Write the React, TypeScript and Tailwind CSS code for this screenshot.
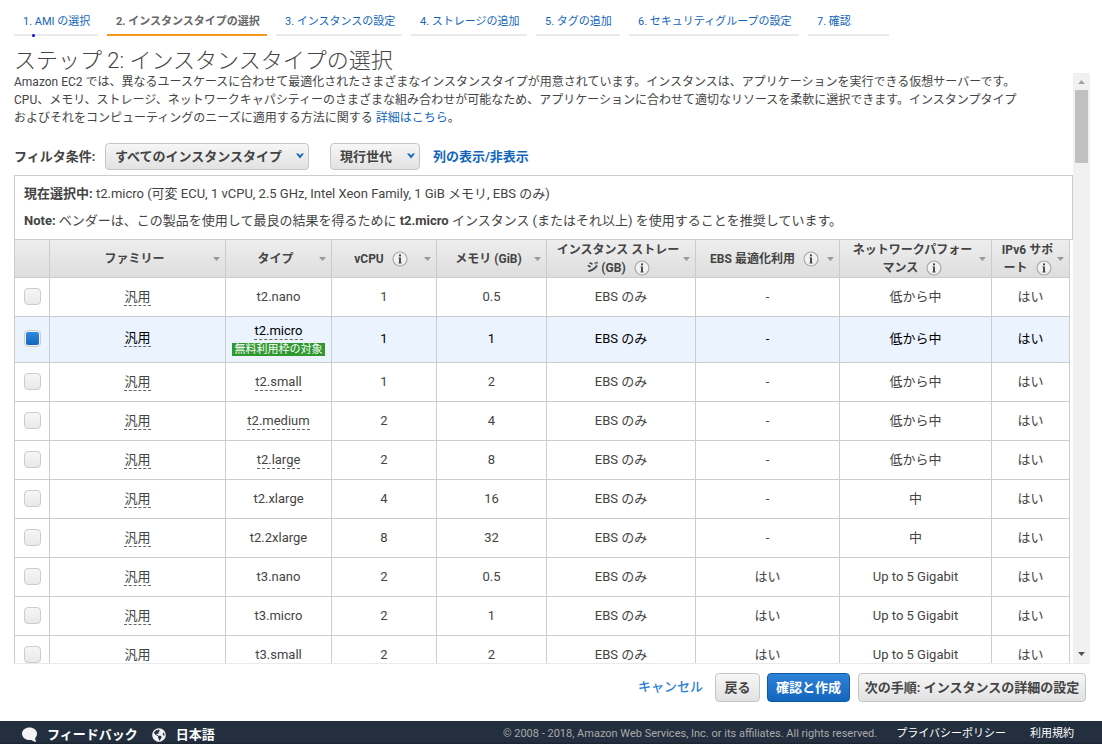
import React, { useState } from "react";
import { FaGlobeAmericas } from "react-icons/fa";

type InstanceType = {
  name: string;
  vcpu: string;
  memory: string;
  ebs: string;
  network: string;
  linked?: boolean;
  freeTier?: boolean;
};

const tabs = [
  { label: "1. AMI の選択", width: "w-[84px]" },
  { label: "2. インスタンスタイプの選択", width: "w-40", active: true },
  { label: "3. インスタンスの設定", width: "w-[126px]" },
  { label: "4. ストレージの追加", width: "w-[116px]" },
  { label: "5. タグの追加", width: "w-[84px]" },
  { label: "6. セキュリティグループの設定", width: "w-[170px]" },
  { label: "7. 確認", width: "w-[81px]" },
];

const columns = [
  { lines: ["ファミリー"], width: "w-44" },
  { lines: ["タイプ"], width: "w-[106px]" },
  { lines: ["vCPU"], info: true, width: "w-[105px]" },
  { lines: ["メモリ (GiB)"], width: "w-[110px]" },
  { lines: ["インスタンス ストレー", "ジ (GB)"], info: true, width: "w-[149px]" },
  { lines: ["EBS 最適化利用"], info: true, width: "w-36" },
  { lines: ["ネットワークパフォー", "マンス"], info: true, width: "w-[152px]" },
  { lines: ["IPv6 サポ", "ート"], info: true, width: "w-[78px]" },
];

const instances: InstanceType[] = [
  { name: "t2.nano", vcpu: "1", memory: "0.5", ebs: "-", network: "低から中" },
  { name: "t2.micro", vcpu: "1", memory: "1", ebs: "-", network: "低から中", linked: true, freeTier: true },
  { name: "t2.small", vcpu: "1", memory: "2", ebs: "-", network: "低から中", linked: true },
  { name: "t2.medium", vcpu: "2", memory: "4", ebs: "-", network: "低から中", linked: true },
  { name: "t2.large", vcpu: "2", memory: "8", ebs: "-", network: "低から中", linked: true },
  { name: "t2.xlarge", vcpu: "4", memory: "16", ebs: "-", network: "中" },
  { name: "t2.2xlarge", vcpu: "8", memory: "32", ebs: "-", network: "中" },
  { name: "t3.nano", vcpu: "2", memory: "0.5", ebs: "はい", network: "Up to 5 Gigabit" },
  { name: "t3.micro", vcpu: "2", memory: "1", ebs: "はい", network: "Up to 5 Gigabit" },
  { name: "t3.small", vcpu: "2", memory: "2", ebs: "はい", network: "Up to 5 Gigabit" },
];

function InfoIcon() {
  return (
    <svg viewBox="0 0 16 16" className="ml-2 inline-block size-4 align-[-4px]" aria-hidden="true">
      <circle cx="8" cy="8" r="7" fill="#f2f2f2" stroke="#a8a8a8" strokeWidth="1.2" />
      <rect x="7" y="3.4" width="2" height="2" fill="#4c4c4c" />
      <path d="M6.4 6.4H9v5.2h.6v.8H6.4v-.8H7V7.2h-.6z" fill="#4c4c4c" />
    </svg>
  );
}

function Chevron() {
  return (
    <svg viewBox="0 0 8 6" className="pointer-events-none absolute top-[10px] right-[5px] h-1.5 w-2" aria-hidden="true">
      <path d="M0 0.5L4 5.5L8 0.5H5.6L4 2.5L2.4 0.5Z" fill="#1166bb" />
    </svg>
  );
}

function Filter({ label, width }: { label: string; width: string }) {
  return (
    <span className={"relative block " + width}>
      <select
        aria-label={label}
        className="block h-[27px] w-full appearance-none rounded border border-[#c5c5c5] bg-linear-to-b from-[#f6f6f6] to-[#e2e2e2] pl-[9px] text-[13px] font-bold text-[#444444]"
      >
        <option>{label}</option>
      </select>
      <Chevron />
    </span>
  );
}

function StepTabs() {
  return (
    <nav className="flex gap-[9px] pl-3.5 text-[11px]">
      {tabs.map((tab) => (
        <a
          key={tab.label}
          href="#"
          className={
            "h-9 shrink-0 border-b-2 pt-[13px] pl-[9px] leading-[18px] whitespace-nowrap " +
            tab.width +
            (tab.active ? " border-[#f7981d] font-bold text-[#666666]" : " border-[#eaeaea] text-[#1166bb]")
          }
        >
          {tab.label}
        </a>
      ))}
      <span className="absolute top-[34px] left-8 size-[3px] rounded-full bg-[#0a0ae6]" />
    </nav>
  );
}

function InstanceTable() {
  const [selected, setSelected] = useState("t2.micro");
  return (
    <table className="w-full table-fixed border-separate border-spacing-0 text-center text-[13px] text-[#444444]">
      <thead>
        <tr className="h-[38px] bg-linear-to-b from-[#eeeeee] to-[#dddddd] text-xs leading-[18px]">
          <th className="w-9 border-r border-b border-l border-[#cccccc]" />
          {columns.map((col) => (
            <th key={col.lines[0]} className={"border-r border-b border-[#cccccc] p-0 font-bold " + col.width}>
              <div className="flex items-center pr-[5px] pl-1.5">
                <span className="flex-1 whitespace-nowrap">
                  {col.lines.map((line, i) => (
                    <React.Fragment key={line}>
                      {i > 0 && <br />}
                      {line}
                    </React.Fragment>
                  ))}
                  {col.info && <InfoIcon />}
                </span>
                <svg viewBox="0 0 7 4" className="h-1 w-[7px] shrink-0" aria-hidden="true">
                  <path d="M0 0H7L3.5 4Z" fill="#999999" />
                </svg>
              </div>
            </th>
          ))}
        </tr>
      </thead>
      <tbody>
        {instances.map((it) => {
          const active = it.name === selected;
          const cell = "border-r border-b border-[#cccccc] p-0" + (it.freeTier ? " pb-0.5" : "");
          return (
            <tr
              key={it.name}
              className={(it.freeTier ? "h-[46px]" : "h-[39px]") + (active ? " bg-[#eaf3fe] text-black" : "")}
            >
              <td className={cell + " border-l"}>
                <input
                  type="checkbox"
                  aria-label={it.name}
                  checked={active}
                  onChange={() => setSelected(it.name)}
                  className="mx-auto mb-px block size-[17px] appearance-none rounded border border-[#cccccc] bg-linear-to-b from-[#f6f6f6] to-[#e9e9e9] p-px checked:bg-none checked:before:block checked:before:size-[13px] checked:before:rounded-xs checked:before:bg-linear-to-b checked:before:from-[#2e8ae0] checked:before:to-[#1166bb]"
                />
              </td>
              <td className={cell}>
                <span className="mb-0.5 inline-block h-4 border-b border-dashed border-[#666666] leading-[14px]">
                  汎用
                </span>
              </td>
              <td className={cell}>
                <span
                  className={
                    "inline-block h-4 leading-[14px]" + (it.linked ? " border-b border-dashed border-[#666666]" : "")
                  }
                >
                  {it.name}
                </span>
                {it.freeTier && (
                  <span className="mx-auto mt-0.5 block h-[13px] w-[93px] bg-[#2f992f] text-[11px] leading-[13px] whitespace-nowrap text-white">
                    無料利用枠の対象
                  </span>
                )}
              </td>
              <td className={cell}>{it.vcpu}</td>
              <td className={cell}>{it.memory}</td>
              <td className={cell}>EBS のみ</td>
              <td className={cell}>{it.ebs}</td>
              <td className={cell}>{it.network}</td>
              <td className={cell}>はい</td>
            </tr>
          );
        })}
      </tbody>
    </table>
  );
}

function Scrollbar() {
  return (
    <div className="flex w-[17px] shrink-0 flex-col items-center bg-[#f1f1f1]" aria-hidden="true">
      <svg viewBox="0 0 17 17" className="size-[17px]">
        <path d="M5 11H12L8.5 7Z" fill="#a3a3a3" />
      </svg>
      <div className="h-[73px] w-[13px] bg-[#c1c1c1]" />
      <svg viewBox="0 0 17 17" className="mt-auto size-[17px]">
        <path d="M5 6H12L8.5 10Z" fill="#505050" />
      </svg>
    </div>
  );
}

export default function App() {
  const grayButton =
    "h-[29px] rounded border border-[#c5c5c5] bg-linear-to-b from-[#f6f6f6] to-[#e2e2e2] text-[13px] font-bold text-[#444444] whitespace-nowrap";
  return (
    <div className="relative flex h-screen flex-col overflow-hidden bg-white font-[Roboto,'Noto_Sans_CJK_JP',sans-serif] text-[#444444]">
      <StepTabs />
      <h1 className="h-[37px] pt-[9px] pl-3.5 text-[22px] leading-8 font-light whitespace-nowrap">
        ステップ 2: インスタンスタイプの選択
      </h1>

      <main className="mr-3 ml-3.5 flex min-h-0 flex-1 border-b border-[#eaeaea]">
        <div className="min-w-0 flex-1 overflow-x-hidden overflow-y-auto [scrollbar-width:none]">
          <p className="text-xs leading-[18px]">
            Amazon EC2 では、異なるユースケースに合わせて最適化されたさまざまなインスタンスタイプが用意されています。インスタンスは、アプリケーションを実行できる仮想サーバーです。
            <br />
            CPU、メモリ、ストレージ、ネットワークキャパシティーのさまざまな組み合わせが可能なため、アプリケーションに合わせて適切なリソースを柔軟に選択できます。インスタンプタイプ
            <br />
            およびそれをコンピューティングのニーズに適用する方法に関する{" "}
            <a href="#" className="text-[#1166bb]">
              詳細はこちら
            </a>
            。
          </p>

          <div className="mt-4 flex h-[27px] items-center text-[13px] font-bold whitespace-nowrap">
            <span className="w-[91px]">フィルタ条件:</span>
            <Filter label="すべてのインスタンスタイプ" width="w-[204px]" />
            <span className="w-[21px]" />
            <Filter label="現行世代" width="w-[90px]" />
            <a href="#" className="ml-[13px] text-[#1166bb]">
              列の表示/非表示
            </a>
          </div>

          <div className="mt-[5px] border border-[#cccccc] pt-[9px] pb-[9px] pl-[9px] text-[13px] leading-[18px]">
            <p>
              <b>現在選択中:</b> t2.micro (可変 ECU, 1 vCPU, 2.5 GHz, Intel Xeon Family, 1 GiB メモリ, EBS のみ)
            </p>
            <p className="mt-[9px]">
              <b>Note:</b> ベンダーは、この製品を使用して最良の結果を得るために <b>t2.micro</b> インスタンス
              (またはそれ以上) を使用することを推奨しています。
            </p>
          </div>

          <div className="pr-[3px]">
            <InstanceTable />
          </div>
        </div>
        <Scrollbar />
      </main>

      <div className="flex h-[57px] shrink-0 items-start justify-end pt-[9px] pr-4">
        <a href="#" className="mr-3 text-[13px] leading-[27px] font-medium text-[#2a7fd8]">
          キャンセル
        </a>
        <button className={grayButton + " mr-[7px] w-[45px]"}>戻る</button>
        <button className="mr-2 h-[29px] w-[83px] rounded border border-[#0f5aa5] bg-linear-to-b from-[#2e82d8] to-[#1166bb] text-[13px] font-bold whitespace-nowrap text-white">
          確認と作成
        </button>
        <button className={grayButton + " w-[228px]"}>次の手順: インスタンスの詳細の設定</button>
      </div>

      <footer className="flex h-[23px] shrink-0 items-center bg-linear-to-b from-[#232f3e] from-90% to-[#1a2330] pt-1 pr-7 pl-[22px] text-[11px] text-white">
        <a href="#" className="flex items-center gap-2.5 text-[13px] font-bold">
          <svg viewBox="0 0 15 15" className="size-[15px]" aria-hidden="true">
            <path
              d="M7.5 0.5C11.5 0.5 15 3 15 6.6C15 8.6 14 10.2 13.2 11C13.2 12.6 13.6 13.8 14.4 14.8C12.4 14.8 10.6 14 9.6 12.9C8.9 13 8.2 13.1 7.5 13.1C3.5 13.1 0 10.4 0 6.6C0 3 3.5 0.5 7.5 0.5Z"
              fill="#f2f2f2"
            />
          </svg>
          フィードバック
        </a>
        <a href="#" className="ml-3.5 flex items-center gap-2.5 text-[13px] font-bold">
          <FaGlobeAmericas className="size-3.5 text-[#f2f2f2]" />
          日本語
        </a>
        <span className="ml-auto text-[#aaaaaa]">
          © 2008 - 2018, Amazon Web Services, Inc. or its affiliates. All rights reserved.
        </span>
        <a href="#" className="ml-[19px]">
          プライバシーポリシー
        </a>
        <a href="#" className="ml-6">
          利用規約
        </a>
      </footer>
    </div>
  );
}
